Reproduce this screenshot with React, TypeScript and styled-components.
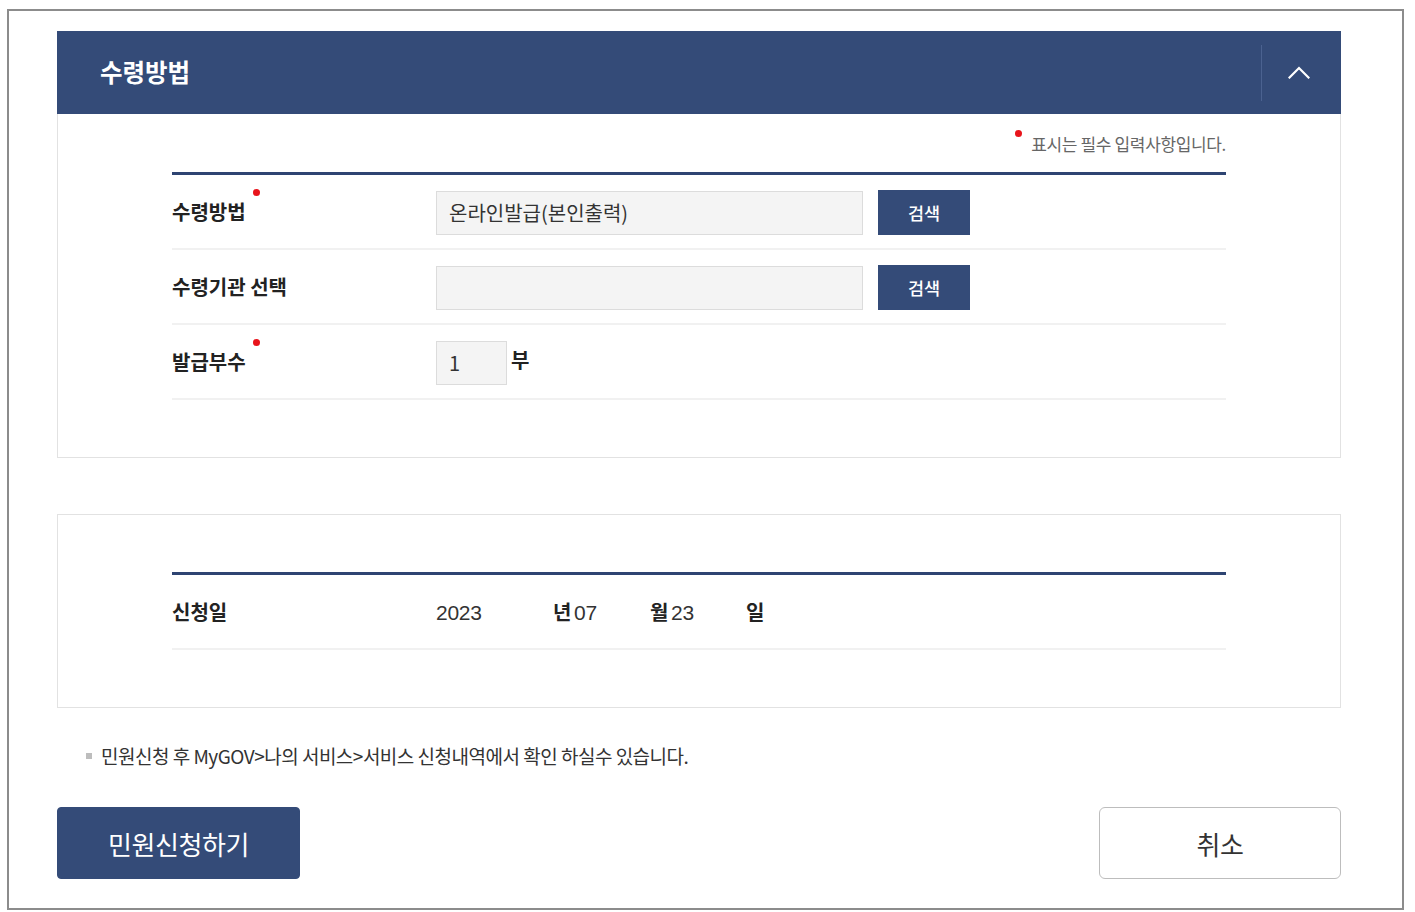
import React from "react";
import styled, { createGlobalStyle } from "styled-components";

const NAVY = "#344b78";
const FONT = `"Noto Sans CJK KR", "Noto Sans", sans-serif`;

const Global = createGlobalStyle`
  html, body { margin: 0; padding: 0; background: #fff; }
  body { font-family: ${FONT}; color: #222; }
  * { box-sizing: border-box; }
`;

const Frame = styled.div`
  margin: 9px 0 0 7px;
  width: 1397px;
  height: 901px;
  border: 2px solid #8c8c8c;
  padding: 20px 61px 0 48px;
  display: flex;
  flex-direction: column;
`;

const Panel = styled.section<{ $gap?: number }>`
  margin-top: ${(p) => p.$gap ?? 0}px;
  display: flex;
  flex-direction: column;
`;

const PanelHeader = styled.header`
  height: 83px;
  background: ${NAVY};
  display: flex;
  align-items: center;
  padding-left: 43px;
`;

const PanelTitle = styled.h2`
  flex: 1;
  margin: 0;
  color: #fff;
  font-size: 24.5px;
  font-weight: 700;
  letter-spacing: 0;
  position: relative;
  top: -1px;
`;

const ToggleButton = styled.button`
  width: 80px;
  height: 56px;
  background: transparent;
  border: none;
  border-left: 1px solid #4b6290;
  display: flex;
  align-items: center;
  justify-content: center;
  padding: 0 5px 0 0;
  cursor: pointer;
`;

const PanelBody = styled.div<{ $top: number; $bordered?: boolean }>`
  border: 1px solid #e2e2e2;
  border-top: ${(p) => (p.$bordered ? "1px solid #e2e2e2" : "none")};
  padding: ${(p) => p.$top}px 114px 57px;
`;

const RequiredNote = styled.p`
  margin: 0;
  height: 58px;
  display: flex;
  align-items: center;
  justify-content: flex-end;
  font-size: 17px;
  color: #666;
  letter-spacing: -0.35px;
`;

const Dot = styled.span`
  display: inline-block;
  width: 7px;
  height: 7px;
  border-radius: 50%;
  background: #e8141b;
  position: relative;
  top: -10px;
  margin-right: 9px;
`;

const Table = styled.div`
  border-top: 3px solid #2e4472;
`;

const Row = styled.div`
  height: 75px;
  padding-top: 2px;
  border-bottom: 2px solid #f1f1f1;
  display: grid;
  grid-template-columns: 264px 1fr;
  align-items: center;
`;

const Label = styled.div<{ $required?: boolean }>`
  font-size: 20px;
  font-weight: 700;
  letter-spacing: 0;
  color: #222;
  position: relative;
  top: -1px;
  span {
    position: relative;
  }
  span::after {
    content: "";
    display: ${(p) => (p.$required ? "block" : "none")};
    position: absolute;
    right: -14px;
    top: -8px;
    width: 7px;
    height: 7px;
    border-radius: 50%;
    background: #e8141b;
  }
`;

const Field = styled.div`
  display: flex;
  align-items: center;
`;

const TextInput = styled.input<{ $w: number }>`
  width: ${(p) => p.$w}px;
  height: 44px;
  background: #f4f4f4;
  border: 1px solid #dcdcdc;
  padding: 0 12px;
  font-family: ${FONT};
  font-size: 20px;
  color: #333;
  outline: none;
`;

const SearchButton = styled.button`
  margin-left: 15px;
  width: 92px;
  height: 45px;
  background: ${NAVY};
  border: none;
  color: #fff;
  font-family: ${FONT};
  font-size: 17.5px;
  font-weight: 500;
  cursor: pointer;
`;

const Unit = styled.span`
  margin-left: 4px;
  font-size: 20px;
  font-weight: 700;
  position: relative;
  top: -3px;
`;

const DateValue = styled.span<{ $w: number }>`
  width: ${(p) => p.$w}px;
  font-family: "Liberation Sans", Arial, sans-serif;
  font-size: 21px;
  color: #333;
  letter-spacing: -0.3px;
`;

const DateUnit = styled.span`
  width: 21px;
  font-size: 20px;
  font-weight: 700;
  color: #222;
  position: relative;
  top: -1px;
`;

const Notice = styled.p`
  margin: 34px 0 0 29px;
  display: flex;
  align-items: center;
  font-size: 19px;
  letter-spacing: -0.5px;
  color: #333;
  &::before {
    content: "";
    width: 6px;
    height: 6px;
    background: #bdbdbd;
    margin-right: 9px;
  }
`;

const Actions = styled.div`
  margin-top: 38px;
  display: flex;
  justify-content: space-between;
`;

const ActionButton = styled.button<{ $primary?: boolean }>`
  width: ${(p) => (p.$primary ? 243 : 242)}px;
  height: 72px;
  border-radius: ${(p) => (p.$primary ? 4 : 6)}px;
  border: 1px solid ${(p) => (p.$primary ? NAVY : "#bdbdbd")};
  background: ${(p) => (p.$primary ? NAVY : "#fff")};
  color: ${(p) => (p.$primary ? "#fff" : "#333")};
  font-family: ${FONT};
  font-size: 26px;
  letter-spacing: -0.4px;
  cursor: pointer;
`;

const Chevron = () => (
  <svg width="22" height="13" viewBox="0 0 22 13" fill="none">
    <path d="M1.5 11.5 L11 2 L20.5 11.5" stroke="#fff" strokeWidth="2.2" strokeLinecap="square" />
  </svg>
);

export default function App() {
  return (
    <>
      <Global />
      <Frame>
        <Panel>
          <PanelHeader>
            <PanelTitle>수령방법</PanelTitle>
            <ToggleButton aria-label="접기">
              <Chevron />
            </ToggleButton>
          </PanelHeader>
          <PanelBody $top={0}>
            <RequiredNote>
              <Dot />
              표시는 필수 입력사항입니다.
            </RequiredNote>
            <Table>
              <Row>
                <Label $required>
                  <span>수령방법</span>
                </Label>
                <Field>
                  <TextInput $w={427} readOnly value="온라인발급(본인출력)" />
                  <SearchButton>검색</SearchButton>
                </Field>
              </Row>
              <Row>
                <Label>
                  <span>수령기관 선택</span>
                </Label>
                <Field>
                  <TextInput $w={427} readOnly value="" />
                  <SearchButton>검색</SearchButton>
                </Field>
              </Row>
              <Row>
                <Label $required>
                  <span>발급부수</span>
                </Label>
                <Field>
                  <TextInput $w={71} readOnly value="1" />
                  <Unit>부</Unit>
                </Field>
              </Row>
            </Table>
          </PanelBody>
        </Panel>

        <Panel $gap={56}>
          <PanelBody $top={57} $bordered>
            <Table>
              <Row>
                <Label>
                  <span>신청일</span>
                </Label>
                <Field>
                  <DateValue $w={117}>2023</DateValue>
                  <DateUnit>년</DateUnit>
                  <DateValue $w={76}>07</DateValue>
                  <DateUnit>월</DateUnit>
                  <DateValue $w={75}>23</DateValue>
                  <DateUnit>일</DateUnit>
                </Field>
              </Row>
            </Table>
          </PanelBody>
        </Panel>

        <Notice>민원신청 후 MyGOV&gt;나의 서비스&gt;서비스 신청내역에서 확인 하실수 있습니다.</Notice>

        <Actions>
          <ActionButton $primary>민원신청하기</ActionButton>
          <ActionButton>취소</ActionButton>
        </Actions>
      </Frame>
    </>
  );
}
